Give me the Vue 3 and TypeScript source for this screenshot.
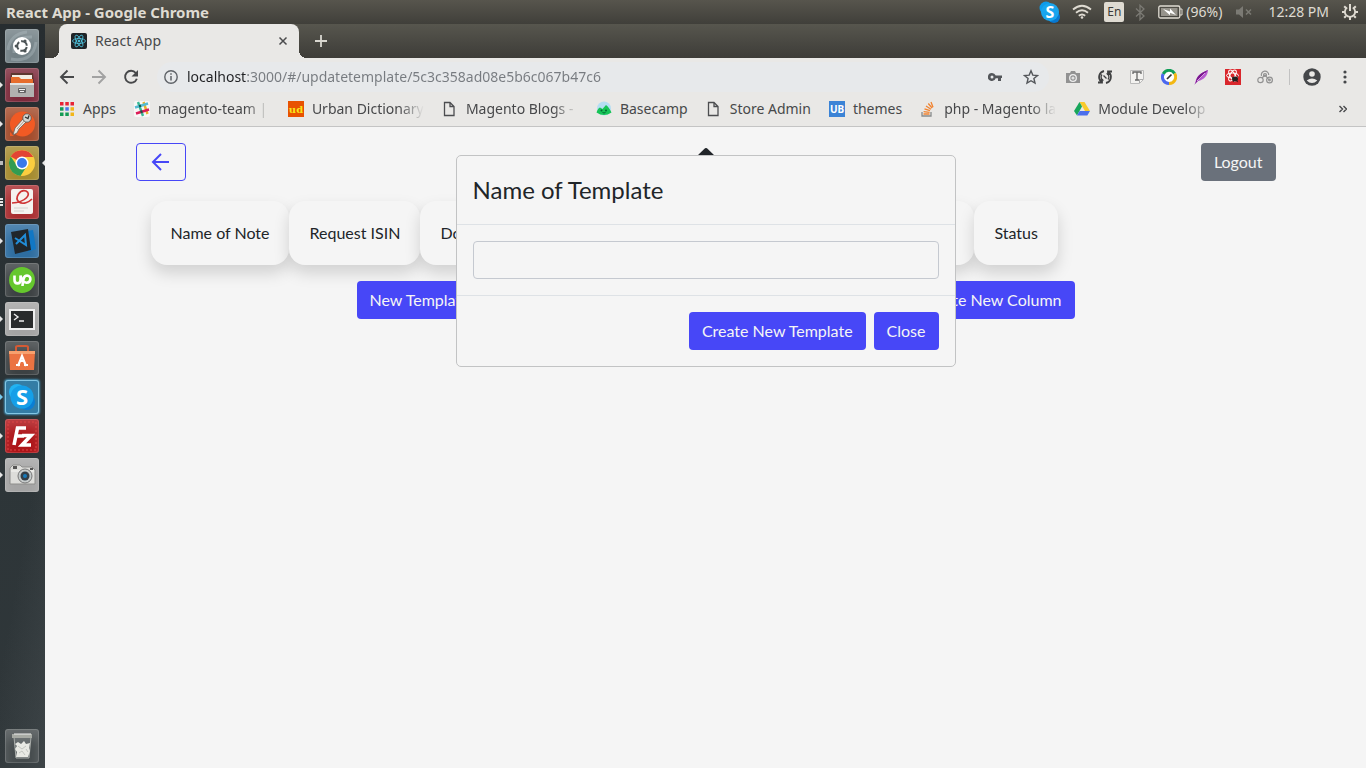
<script setup lang="ts">
import { ref } from 'vue'

interface Launcher { id: string; label: string; running?: boolean; active?: boolean; windows?: number }
interface Bookmark { id: string; label: string; faded?: boolean }

const launchers: Launcher[] = [
  { id: 'dash', label: 'Dash' },
  { id: 'files', label: 'Files', running: true },
  { id: 'postman', label: 'Postman', running: true },
  { id: 'chrome', label: 'Google Chrome', windows: 2, active: true },
  { id: 'reader', label: 'Document Viewer', windows: 3 },
  { id: 'code', label: 'Code', running: true },
  { id: 'upwork', label: 'Upwork' },
  { id: 'terminal', label: 'Terminal', running: true },
  { id: 'software', label: 'Software' },
  { id: 'skype', label: 'Skype', running: true },
  { id: 'filezilla', label: 'FileZilla', running: true },
  { id: 'camera', label: 'Screenshot', running: true }
]

const bookmarks: Bookmark[] = [
  { id: 'apps', label: 'Apps' },
  { id: 'slack', label: 'magento-team |', faded: true },
  { id: 'urban', label: 'Urban Dictionary', faded: true },
  { id: 'page', label: 'Magento Blogs -', faded: true },
  { id: 'basecamp', label: 'Basecamp' },
  { id: 'page', label: 'Store Admin' },
  { id: 'themes', label: 'themes' },
  { id: 'stack', label: 'php - Magento la', faded: true },
  { id: 'drive', label: 'Module Develop', faded: true }
]

const address = ref('localhost:3000/#/updatetemplate/5c3c358ad08e5b6c067b47c6')
const templateName = ref('')
const columns = ['Name of Note', 'Request ISIN', 'Documents', 'Status']
</script>

<template>
  <div class="desktop">
    <header class="panel">
      <span class="window-title">React App - Google Chrome</span>
      <div class="indicators">
        <svg class="i-skype" width="22" height="22" viewBox="0 0 22 22">
          <circle cx="7" cy="7" r="6.5" fill="#0d9bea" /><circle cx="15" cy="16" r="6" fill="#0878d0" /><circle cx="11" cy="11" r="9" fill="#18a5ee" />
          <text x="11" y="17" text-anchor="middle" font-size="16" font-weight="700" fill="#fff">S</text>
        </svg>
        <svg class="i-wifi" width="20" height="16" viewBox="0 0 20 16" fill="none" stroke="#dfdbd2" stroke-width="1.8">
          <path d="M1 5.5Q10-2 19 5.5M4 8.8q6-5 12 0M6.8 11.8q3.2-2.6 6.4 0" /><circle cx="10" cy="13.5" r="1.3" fill="#dfdbd2" stroke="none" />
        </svg>
        <span class="lang">En</span>
        <svg class="i-bt" width="10" height="17" viewBox="0 0 10 17" fill="none" stroke="#7b7a74" stroke-width="1.3"><path d="M1 4.5l8 7.5-4 3.7V1.3L9 5l-8 7.5" /></svg>
        <svg class="i-battery" width="25" height="14" viewBox="0 0 25 14">
          <rect x=".8" y="1" width="21" height="12" rx="1.5" fill="none" stroke="#dfdbd2" stroke-width="1.3" /><path d="M22 4h2v6h-2" fill="none" stroke="#dfdbd2" />
          <path d="M3 3h16.500v8H3z" fill="#96938b" /><path d="M5 4l7 2.500V3.500L18 10l-6-2.300v2.600z" fill="#fff" />
        </svg>
        <span class="percent">(96%)</span>
        <svg class="i-mute" width="18" height="14" viewBox="0 0 18 14"><path d="M1 4.500h3L8 1v12L4 9.500H1z" fill="#7b7a74" /><path d="M11 4.500l5 5m0-5l-5 5" stroke="#7b7a74" stroke-width="1.5" /></svg>
        <time class="clock">12:28 PM</time>
        <svg width="18" height="18" viewBox="0 0 18 18" fill="none" stroke="#dfdbd2">
          <path d="M6.200 4.600a5.100 5.100 0 1 0 5.600 0" stroke-width="1.8" /><path d="M9 1v7" stroke-width="2" />
          <path d="M5 5L3.200 3.200M13 5l1.800-1.800M4 9H1M17 9h-3M5 13l-1.800 1.800M13 13l1.800 1.800M9 14v3" stroke-width="2" />
        </svg>
      </div>
    </header>

    <div class="workspace">
      <nav class="launcher" aria-label="Launcher">
        <button v-for="app in launchers" :key="app.id" type="button" class="tile" :class="[app.id, { running: app.running, active: app.active, pair: app.windows === 2, trio: app.windows === 3 }]" :aria-label="app.label">
          <svg v-if="app.id === 'dash'" viewBox="0 0 34 34">
            <path d="M3 21Q5 5 22 3M6 30Q28 34 31 13M9 24Q8 7 27 8" fill="none" stroke="#b2bfc3" stroke-opacity=".4" stroke-width="3" />
            <circle cx="17" cy="17" r="9" fill="#fff" /><circle cx="17" cy="17" r="4.800" fill="none" stroke="#4c5456" stroke-width="2" stroke-dasharray="8.050 2" stroke-dashoffset="-1" />
            <circle cx="11.200" cy="17" r="1.600" fill="#4c5456" /><circle cx="20" cy="12" r="1.600" fill="#4c5456" /><circle cx="20" cy="22" r="1.600" fill="#4c5456" />
          </svg>
          <svg v-else-if="app.id === 'files'" viewBox="0 0 34 34">
            <path d="M6 5h22l1 10H5z" fill="#5d3830" /><path d="M7 7h20v8H7z" fill="#f1eee4" /><path d="M6 9h8l2 2h12v5H6z" fill="#e66d2c" />
            <path d="M5 15h24v14H5z" fill="#b1b1af" /><path d="M5 15h24v2H5z" fill="#e3e3e1" /><rect x="13" y="20" width="8" height="5" rx="1" fill="#666" /><path d="M14 21h6v1h-6zM15 23h4v1h-4z" fill="#eee" />
          </svg>
          <svg v-else-if="app.id === 'postman'" viewBox="0 0 34 34">
            <circle cx="17.500" cy="17" r="12.500" fill="#f15a24" /><path d="M5 25v4h4z" fill="#f15a24" />
            <path d="M18 12l-8 9-2 7 4-2 2-4 8-8z" fill="#eee7df" stroke="#6b6055" stroke-width=".8" /><path d="M20 13l-8 9" stroke="#a89c8e" />
            <circle cx="22" cy="11" r="4.200" fill="#d5d4cf" stroke="#4d504e" stroke-width=".8" /><path d="M20 10l3 1.500 1-3" fill="none" stroke="#333" stroke-width="1.300" />
          </svg>
          <svg v-else-if="app.id === 'chrome'" viewBox="0 0 34 34">
            <circle cx="17" cy="17" r="13" fill="#fbcd3f" /><path d="M17 17L5.700 10.500A13 13 0 0 1 28.300 11H17z" fill="#e24434" />
            <path d="M5.700 10.500A13 13 0 0 0 15.500 30L22 20l-9 1z" fill="#329c51" /><circle cx="17" cy="17" r="6.500" fill="#fff" /><circle cx="17" cy="17" r="5" fill="#3979ea" />
          </svg>
          <svg v-else-if="app.id === 'reader'" viewBox="0 0 34 34">
            <rect x="6" y="4" width="22" height="25" rx="2" fill="#f5f2ef" /><path d="M7 18c14-1 20-9 14-12-6-2-12 7-7 11 4 3 10 0 13-3" fill="none" stroke="#cf3535" stroke-width="1.700" /><path d="M9 23h14M9 26h10" stroke="#d4d2d0" />
          </svg>
          <svg v-else-if="app.id === 'code'" viewBox="0 0 34 34">
            <path d="M22 7l6-1 3 19-8 3z" fill="#1177c4" /><path d="M6 8l17-3 3 21-16 4z" fill="#20262b" /><path d="M10 14l11 7-1-10-9 9" fill="none" stroke="#218dd8" stroke-width="2" />
          </svg>
          <svg v-else-if="app.id === 'upwork'" viewBox="0 0 34 34">
            <circle cx="17" cy="17" r="13" fill="#65c72d" /><path d="M9.500 12.500V17c0 4.500 6 4.500 6 0v-4.500c1 4 3 7 6 7.200 5 0 5.200-7 .500-7.200-3 0-4 3-4.500 10.500" fill="none" stroke="#fff" stroke-width="2.600" />
          </svg>
          <svg v-else-if="app.id === 'terminal'" viewBox="0 0 34 34">
            <rect x="4" y="7" width="26" height="21" fill="#eee" /><rect x="6" y="9" width="22" height="17" fill="#292b2c" /><path d="M9 12l4 3-4 3M14 19h5" fill="none" stroke="#eee" stroke-width="1.400" />
          </svg>
          <svg v-else-if="app.id === 'software'" viewBox="0 0 34 34">
            <path d="M11 10V6q0-1 2-1h8q2 0 2 1v4" fill="none" stroke="#d45a34" stroke-width="2" /><path d="M4 10h26l-1 19H5z" fill="#eb7342" /><path d="M4 10h26v3H4z" fill="#f7a06e" />
            <path d="M13 25l4-10 4 10M14 20h6M11 24h4m4 0h4" fill="none" stroke="#fff" stroke-width="2.200" />
          </svg>
          <svg v-else-if="app.id === 'skype'" viewBox="0 0 34 34">
            <circle cx="12" cy="12" r="8" fill="#22b3f2" /><circle cx="22" cy="22" r="8" fill="#0a7ed5" /><circle cx="17" cy="17" r="11.500" fill="#159fe8" />
            <text x="17" y="25" text-anchor="middle" font-size="22" font-weight="700" fill="#fff">S</text>
          </svg>
          <svg v-else-if="app.id === 'filezilla'" viewBox="0 0 34 34">
            <rect x="3" y="3" width="28" height="28" fill="none" stroke="#d44" stroke-width="1" stroke-dasharray="2 2" />
            <path d="M9 26l3.500-17H21M11 17h8M17 16.500h9L17 26h9" fill="none" stroke="#fff" stroke-width="3.600" />
          </svg>
          <svg v-else viewBox="0 0 34 34">
            <path d="M5 10l3-3h7l2 2h10l3 3v14H5z" fill="#ddddda" stroke="#8e8e8c" /><path d="M6 13h23" stroke="#f6f6f3" /><circle cx="20" cy="18" r="7" fill="#c6cbcb" stroke="#777" />
            <circle cx="20" cy="18" r="4.500" fill="#343e47" /><circle cx="20" cy="18" r="2" fill="#147abb" /><path d="M8 8h4v3H8zM25 10h3v2h-3z" fill="#555" />
          </svg>
        </button>
        <button type="button" class="tile trash" aria-label="Trash">
          <svg viewBox="0 0 34 34">
            <path d="M9 8h17l-2 21H11z" fill="#949b9b" fill-opacity=".35" stroke="#a9adaa" /><path d="M7 5h20v4H7z" fill="#a7aaa4" /><path d="M9 5h17" stroke="#eee" />
            <path d="M10 15l3-2 3 2 3-3 2 3 4-1-1 5 1 3-2 6H11l1-5-2-3 2-3z" fill="#e8e9e4" /><path d="M13 17l4 3 4-3M14 24l3-2 3 4M21 20l2 3" stroke="#c2c5c0" fill="none" />
          </svg>
        </button>
      </nav>

      <section class="browser">
        <div class="tabstrip" role="tablist">
          <div class="tab" role="tab" aria-selected="true">
            <svg width="16" height="16" viewBox="0 0 16 16" fill="none" stroke="#50c8e4" stroke-width=".8">
              <rect width="16" height="16" rx="2" fill="#202428" stroke="none" /><ellipse cx="8" cy="8" rx="6.500" ry="2.500" /><ellipse cx="8" cy="8" rx="6.500" ry="2.500" transform="rotate(60 8 8)" /><ellipse cx="8" cy="8" rx="6.500" ry="2.500" transform="rotate(120 8 8)" /><circle cx="8" cy="8" r="1" fill="#50c8e4" />
            </svg>
            <span class="tab-title">React App</span>
            <button type="button" aria-label="Close tab"><svg width="10" height="10" viewBox="0 0 10 10"><path d="M1.500 1.500l7 7m0-7l-7 7" stroke="#4a4b4d" stroke-width="1.500" /></svg></button>
          </div>
          <button type="button" class="new-tab" aria-label="New tab"><svg width="12" height="12" viewBox="0 0 12 12"><path d="M6 0v12M0 6h12" stroke="#d9d7d0" stroke-width="1.800" /></svg></button>
        </div>

        <div class="toolbar">
          <button type="button" aria-label="Back"><svg width="16" height="16" viewBox="0 0 16 16" fill="none" stroke="#47484a" stroke-width="1.900"><path d="M15 8H2M8.500 1.500L2 8l6.500 6.500" /></svg></button>
          <button type="button" aria-label="Forward"><svg width="16" height="16" viewBox="0 0 16 16" fill="none" stroke="#a2a2a2" stroke-width="1.900"><path d="M1 8h13M7.500 1.500L14 8l-6.500 6.500" /></svg></button>
          <button type="button" aria-label="Reload"><svg width="16" height="16" viewBox="0 0 16 16"><path d="M12.800 4A6 6 0 1 0 13.800 9.700" fill="none" stroke="#47484a" stroke-width="1.900" /><path d="M15 1v6.500H8.500z" fill="#47484a" /></svg></button>
          <div class="omnibox">
            <svg width="14" height="14" viewBox="0 0 14 14"><circle cx="7" cy="7" r="6.200" fill="none" stroke="#5f6368" stroke-width="1.400" /><path d="M7 6v4.500M7 3.300v1.500" stroke="#5f6368" stroke-width="1.500" /></svg>
            <input v-model="address" type="text" aria-label="Address" spellcheck="false">
            <svg width="14" height="10" viewBox="0 0 14 10"><path d="M4 1a4 4 0 1 0 3.700 5.200H10V9h3V6h1V3.500H7.700A4 4 0 0 0 4 1zm0 2.500a1.500 1.500 0 1 1 0 3 1.500 1.500 0 0 1 0-3z" fill="#53565a" /></svg>
            <svg class="star" width="16" height="16" viewBox="0 0 16 16"><path d="M8 1.800l1.800 4.300 4.700.4-3.600 3 1.100 4.600L8 11.700l-4 2.400 1.100-4.600-3.600-3 4.700-.4z" fill="none" stroke="#53565a" stroke-width="1.400" /></svg>
          </div>
          <div class="extensions">
            <svg viewBox="0 0 16 16"><path d="M1 4h4l1-2h4l1 2h4v10H1z" fill="#929292" /><circle cx="8" cy="9" r="3.300" fill="none" stroke="#eee" stroke-width="1.300" /><circle cx="8" cy="9" r="1.600" fill="#e0e0e0" /></svg>
            <svg viewBox="0 0 16 16" fill="none" stroke="#404142" stroke-width="1.800"><path d="M7 2A6.200 6.200 0 0 0 4 12.500M9 14A6.200 6.200 0 0 0 12 3.500M1 13.500h4V10M15 2.500h-4V6" /><path d="M9.500 4.500a3.800 3.800 0 0 1 1.500 6M6.500 11.500a3.800 3.800 0 0 1-1.500-6M6.500 6.500l3 3" stroke-width="1.300" /></svg>
            <svg viewBox="0 0 16 16"><path d="M1.500 1.500h13v9l-4 4h-9z" fill="#f3f2f0" stroke="#bbb" /><path d="M4 5V3h8v2M8 3v8M6 11h4" fill="none" stroke="#666" stroke-width="1.300" /><path d="M10.500 14v-3.500H14" fill="none" stroke="#aaa" /></svg>
            <svg viewBox="0 0 16 16" fill="none" stroke-width="3"><circle cx="8" cy="8" r="5" fill="#fff" stroke="none" /><path d="M2.200 5A6.500 6.500 0 0 1 13.600 4.500" stroke="#109e58" /><path d="M13.600 4.500A6.500 6.500 0 0 1 8 14.500" stroke="#f3b813" /><path d="M8 14.500A6.500 6.500 0 0 1 2.200 5" stroke="#4b68ef" /><path d="M6 10l4.500-4.500" stroke="#333" stroke-width="1.700" /></svg>
            <svg viewBox="0 0 16 16"><path d="M2 15C3 8 7 4 15 1c0 5-4 10-10 11z" fill="#b85bd0" /><path d="M1 16L15 1C7 4 3 8 3 13" fill="#7a178f" /><path d="M4 12l8-8" stroke="#d7a1e0" /></svg>
            <svg viewBox="0 0 16 16"><path d="M0 0h16v16H0z" fill="#d9262c" /><g fill="none" stroke="#fff"><ellipse cx="7.500" cy="6.500" rx="6" ry="2.500" /><ellipse cx="7.500" cy="6.500" rx="6" ry="2.500" transform="rotate(60 7.500 6.500)" /><ellipse cx="7.500" cy="6.500" rx="6" ry="2.500" transform="rotate(120 7.500 6.500)" /></g><ellipse cx="10" cy="10" rx="3" ry="2.500" fill="#222" /><path d="M7 8l6 5M8 13l5-6" stroke="#222" stroke-width=".8" /></svg>
            <svg viewBox="0 0 16 16" fill="none" stroke="#929292" stroke-width="1.200"><path d="M4.500 7a3.700 3.700 0 1 1 7.200-1" /><circle cx="8" cy="6" r="1.500" /><circle cx="3.500" cy="11" r="2.700" /><circle cx="12.500" cy="11" r="2.900" /><circle cx="12.500" cy="11" r=".8" /><path d="M5 9l3-3 4 5" /></svg>
          </div>
          <span class="divider"></span>
          <button type="button" class="profile" aria-label="Profile"><svg width="18" height="18" viewBox="0 0 18 18"><circle cx="9" cy="9" r="8.700" fill="#45474a" /><circle cx="9" cy="6" r="2.800" fill="#e9e8e6" /><path d="M3.700 12.500q5.300-4 10.600 0-5.300 5-10.600 0z" fill="#e9e8e6" /></svg></button>
          <button type="button" class="menu" aria-label="Menu"><svg width="4" height="14" viewBox="0 0 4 14" fill="#45474a"><circle cx="2" cy="2" r="1.600" /><circle cx="2" cy="7" r="1.600" /><circle cx="2" cy="12" r="1.600" /></svg></button>
        </div>

        <nav class="bookmarks" aria-label="Bookmarks">
          <a v-for="(mark, index) in bookmarks" :key="index" href="#" :class="{ faded: mark.faded }">
            <svg v-if="mark.id === 'apps'" viewBox="0 0 16 16"><path d="M1 1h3.500v3.500H1zM6.300 1h3.500v3.500H6.300zM11.500 1H15v3.500h-3.500z" fill="#e82335" /><path d="M1 6.200h3.500v3.500H1z" fill="#149b55" /><path d="M6.300 6.200h3.500v3.500H6.300z" fill="#4a78e8" /><path d="M11.500 6.200H15v3.500h-3.500z" fill="#f2b619" /><path d="M1 11.500h3.500V15H1zM6.300 11.500h3.500V15H6.300z" fill="#149b55" /><path d="M11.500 11.500H15V15h-3.500z" fill="#f2b619" /></svg>
            <svg v-else-if="mark.id === 'slack'" viewBox="0 0 16 16" stroke-width="2.400"><rect width="16" height="16" rx="2" fill="#f8f7f6" /><path d="M4 1l5 14" stroke="#36b994" /><path d="M9.500 1l4 12" stroke="#e7b12c" /><path d="M1 6.500l13-4" stroke="#54bcd2" /><path d="M2 12.500l13-4" stroke="#dc1c57" /><path d="M5 5.300l2-.6M6.500 11l2-.7" stroke="#1b5247" /></svg>
            <svg v-else-if="mark.id === 'urban'" viewBox="0 0 16 16"><path d="M0 0h16v16H0z" fill="#e85200" /><text x="8" y="12" text-anchor="middle" font-family="DejaVu Serif" font-size="10" font-weight="700" fill="#f8e51c">ud</text></svg>
            <svg v-else-if="mark.id === 'page'" viewBox="0 0 16 16"><path d="M2.500 1.500H8l4 4v9H2.500zM8 1.500v4h4" fill="none" stroke="#4c4d50" stroke-width="1.300" /></svg>
            <svg v-else-if="mark.id === 'basecamp'" viewBox="0 0 16 16"><circle cx="8" cy="7.500" r="7" fill="#b5def3" /><path d="M.500 11.500Q2 7 4 6.500l2.500 1.500L10 4q3 2 5.500 7.500-7.500 5-15 0z" fill="#16c457" /><circle cx="5.500" cy="9.500" r="1" fill="#063" /><circle cx="10" cy="9.500" r="1" fill="#063" /><path d="M6.500 11.500q1.500 1 3 0" fill="none" stroke="#063" /></svg>
            <svg v-else-if="mark.id === 'themes'" viewBox="0 0 16 16"><path d="M0 0h16v16H0z" fill="#3b83d6" /><text x="8" y="12" text-anchor="middle" font-size="10" font-weight="700" fill="#fff">UB</text></svg>
            <svg v-else-if="mark.id === 'stack'" viewBox="0 0 16 16" fill="none"><path d="M2 11v4h9v-4" stroke="#888b8c" stroke-width="1.300" /><path d="M3.500 13h6M3.600 10.700l6 .7M4.500 7.800l5.500 1.900M6 5l5 3.200M8.300 2.500l3.800 4.500M11 1l2 5.300" stroke="#f18330" stroke-width="1.300" /></svg>
            <svg v-else viewBox="0 0 16 16"><path d="M5.500 1h5L16 10h-5z" fill="#f9ca2b" /><path d="M5.500 1L8 5.500 3 14.500 0 10z" fill="#18a65b" /><path d="M5.600 10H16l-2.700 4.500H3z" fill="#4c6fec" /></svg>
            <span>{{ mark.label }}</span>
          </a>
          <button type="button" class="overflow" aria-label="More bookmarks"><svg width="8" height="8" viewBox="0 0 8 8" fill="none" stroke="#47484a" stroke-width="1.400"><path d="M.500 1l3 3-3 3M4.500 1l3 3-3 3" /></svg></button>
        </nav>

        <main class="page">
          <div class="container">
            <div class="page-head">
              <button type="button" class="btn outline" aria-label="Back to templates"><svg width="24" height="24" viewBox="0 0 24 24" fill="none" stroke="currentColor" stroke-width="2"><path d="M20 12H5M12 4l-8 8 8 8" /></svg></button>
              <button type="button" class="btn secondary">Logout</button>
            </div>
            <ul class="columns">
              <li v-for="name in columns" :key="name" :class="{ wide: name === 'Documents' }">{{ name }}</li>
            </ul>
            <div class="actions">
              <button type="button" class="btn primary">New Template</button>
              <button type="button" class="btn primary">Create New Column</button>
            </div>
          </div>

          <svg class="caret" width="20" height="10" viewBox="0 0 20 10" aria-hidden="true"><path d="M0 10L9 1.300q1-.7 2 0l9 8.700z" fill="#212529" /></svg>
          <form class="modal" role="dialog" aria-labelledby="modal-title" @submit.prevent>
            <div class="modal-head"><h4 id="modal-title">Name of Template</h4></div>
            <div class="modal-body"><input v-model="templateName" type="text" aria-labelledby="modal-title"></div>
            <div class="modal-foot">
              <button type="submit" class="btn primary">Create New Template</button>
              <button type="button" class="btn primary">Close</button>
            </div>
          </form>
        </main>
      </section>
    </div>
  </div>
</template>

<style>
body { margin: 0; }
</style>

<style scoped>
* { box-sizing: border-box; }
button { margin: 0; padding: 0; border: 0; background: none; font: inherit; color: inherit; }
svg { display: block; flex: none; }
.desktop { display: flex; flex-direction: column; min-height: 100vh; font: 14px/20px "Noto Sans", sans-serif; color: #47484a; }
.panel { height: 24px; display: flex; align-items: center; justify-content: space-between; padding: 0 7px 0 6px; background: linear-gradient(#57554d, #403f3a); color: #dfdbd2; }
.window-title { font-size: 15px; font-weight: 700; }
.indicators { display: flex; align-items: center; }
.i-skype { margin-right: 11px; }
.i-wifi { margin-right: 12px; }
.lang { width: 20px; height: 20px; border-radius: 2px; background: #dfdbd2; color: #3c3b37; font-size: 12px; text-align: center; margin-right: 11px; }
.i-bt { margin-right: 13px; }
.i-battery { margin-right: 3px; }
.percent { margin-right: 13px; }
.i-mute { margin-right: 15px; }
.clock { margin-right: 12px; }

.workspace { flex: 1; display: flex; }
.launcher { width: 45px; flex: none; display: flex; flex-direction: column; gap: 5px; padding: 5px; background: linear-gradient(100deg, transparent 65%, #50575a66), linear-gradient(#272d30, #2d3538 60%, #30373a); }
.tile { position: relative; width: 34px; height: 34px; border-radius: 3px; background: #3c4143; box-shadow: inset 0 0 0 1px #ffffff24, inset 0 9px 12px #ffffff30; }
.tile svg { width: 34px; height: 34px; }
.tile.dash { background: #738186; }
.tile.files { background: #7c2a3b; }
.tile.postman { background: #a34c2c; }
.tile.chrome { background: #a58b2e; }
.tile.reader { background: #a92d30; }
.tile.code { background: #2e6da0; }
.tile.terminal, .tile.camera { background: #a4a4a4; }
.tile.skype { background: #347da5; box-shadow: inset 0 0 0 1px #83c7e5, 0 0 2px 1px #438eb2; }
.tile.filezilla { background: #ad1418; }
.tile.trash { margin-top: auto; background: #454b4d; }
.tile.running::before { content: ""; position: absolute; left: -5px; top: 14px; border: 3px solid transparent; border-left-color: #e6e6e6; border-right: 0; }
.tile.pair::before { content: ""; position: absolute; left: -5px; top: 15px; width: 3px; height: 4px; background: #b9bbbc; }
.tile.trio::before { content: ""; position: absolute; left: -5px; top: 13px; width: 3px; height: 8px; background: repeating-linear-gradient(#e6e6e6 0 2px, transparent 2px 3px); }
.tile.active::after { content: ""; position: absolute; right: -6px; top: 14px; border: 3px solid transparent; border-right-color: #e6e6e6; border-left: 0; }
.tile.skype::before { border-left-color: #75c9ee; }

.browser { flex: 1; min-width: 0; display: flex; flex-direction: column; background: #e9e8e6; }
.tabstrip { height: 34px; display: flex; align-items: center; padding-left: 14px; background: linear-gradient(#57564e, #3d3c38); }
.tab { position: relative; width: 240px; height: 34px; padding: 0 11px 0 12px; display: flex; align-items: center; gap: 8px; border-radius: 8px 8px 0 0; background: #e9e8e6; }
.tab::before, .tab::after { content: ""; position: absolute; bottom: 0; width: 8px; height: 8px; }
.tab::before { left: -8px; background: radial-gradient(circle at 0 0, transparent 8px, #e9e8e6 8px); }
.tab::after { right: -8px; background: radial-gradient(circle at 100% 0, transparent 8px, #e9e8e6 8px); }
.tab-title { flex: 1; }
.new-tab { margin-left: 16px; }
.toolbar { height: 37px; display: flex; align-items: center; gap: 16px; padding: 0 19px 0 14px; }
.omnibox { flex: 1; min-width: 0; height: 30px; display: flex; align-items: center; margin-left: 2px; padding: 0 10px 0 7px; gap: 9px; border-radius: 15px; background: #e7e9eb; }
.omnibox input { flex: 1; min-width: 0; height: 24px; padding: 0; border: 0; outline: 0; font: inherit; color: transparent; background: linear-gradient(90deg, #202124 59px, #777b80 59px); background-clip: text; -webkit-background-clip: text; }
.star { margin-left: 12px; }
.extensions { display: flex; gap: 16px; }
.extensions svg { width: 16px; height: 16px; }
.divider { width: 1px; height: 16px; background: #c2c2c2; }
.profile { margin-left: -3px; }
.menu { margin-left: 6px; }
.bookmarks { height: 32px; display: flex; align-items: center; gap: 18px; padding: 0 19px 4px 14px; border-bottom: 1px solid #c4c4c4; }
.bookmarks a { display: flex; align-items: center; gap: 8px; color: inherit; text-decoration: none; }
.bookmarks a svg { width: 16px; height: 16px; }
.bookmarks span { white-space: nowrap; }
.bookmarks .faded span { width: 112px; mask-image: linear-gradient(90deg, #000 78%, transparent); }
.overflow { margin-left: auto; }

.page { position: relative; flex: 1; background: #f5f5f5; font: 16px/24px Lato, sans-serif; color: #212529; }
.container { max-width: 1140px; margin: 0 auto; padding-top: 16px; }
.page-head { display: flex; justify-content: space-between; }
.btn { height: 38px; padding: 0 13px; border-radius: 4px; color: #f5f5f5; }
.primary { background: #4747f7; }
.secondary { background: #6a717b; }
.outline { border: 1px solid #4747f7; padding: 0 12px; color: #4747f7; }
.columns { list-style: none; display: flex; margin: 20px 0 0; padding: 0 15px; }
.columns li { height: 64px; padding: 20px; border-radius: 16px; background: #f5f5f5; box-shadow: 0 8px 16px #00000026; white-space: nowrap; }
.columns .wide { width: 554px; }
.actions { position: relative; left: 10px; display: flex; justify-content: space-between; max-width: 718px; margin: 16px auto 0; }
.caret { position: absolute; top: 20px; left: 50%; margin-left: -10px; }
.modal { position: absolute; top: 28px; left: 0; right: 0; width: 500px; margin: 0 auto; border: 1px solid #c2c3c4; border-radius: 5px; background: #f5f5f5; }
.modal-head { padding: 16px; border-bottom: 1px solid #dee2e6; }
.modal h4 { margin: 0; font-size: 24px; line-height: 36px; font-weight: 400; }
.modal-body { padding: 16px; }
.modal-body input { display: block; width: 100%; height: 38px; padding: 0 12px; border: 1px solid #c5c9d0; border-radius: 4px; background: transparent; font: inherit; color: inherit; }
.modal-foot { display: flex; justify-content: flex-end; gap: 8px; padding: 16px; border-top: 1px solid #dee2e6; }
</style>
